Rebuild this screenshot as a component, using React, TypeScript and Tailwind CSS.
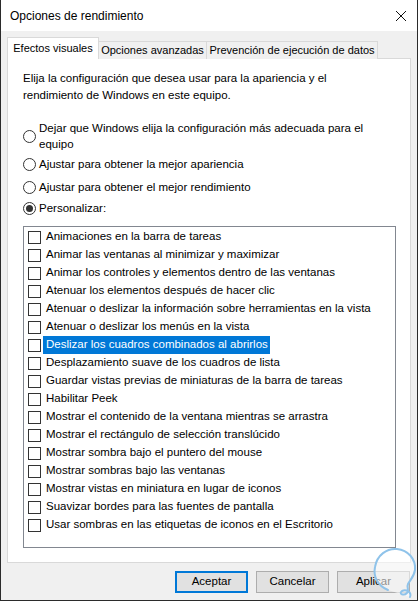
import React from "react";

const items = [
  "Animaciones en la barra de tareas",
  "Animar las ventanas al minimizar y maximizar",
  "Animar los controles y elementos dentro de las ventanas",
  "Atenuar los elementos después de hacer clic",
  "Atenuar o deslizar la información sobre herramientas en la vista",
  "Atenuar o deslizar los menús en la vista",
  "Deslizar los cuadros combinados al abrirlos",
  "Desplazamiento suave de los cuadros de lista",
  "Guardar vistas previas de miniaturas de la barra de tareas",
  "Habilitar Peek",
  "Mostrar el contenido de la ventana mientras se arrastra",
  "Mostrar el rectángulo de selección translúcido",
  "Mostrar sombra bajo el puntero del mouse",
  "Mostrar sombras bajo las ventanas",
  "Mostrar vistas en miniatura en lugar de iconos",
  "Suavizar bordes para las fuentes de pantalla",
  "Usar sombras en las etiquetas de iconos en el Escritorio",
];

function Radio({ checked }: { checked?: boolean }) {
  return (
    <span className="w-[13px] h-[13px] rounded-full border border-[#333] bg-white flex items-center justify-center shrink-0">
      {checked && <span className="w-[7px] h-[7px] rounded-full bg-[#333]" />}
    </span>
  );
}

function Button({ label, primary }: { label: string; primary?: boolean }) {
  return (
    <button
      className={
        "w-[73px] h-[22px] bg-[#e1e1e1] text-[11.5px] text-black " +
        (primary ? "border-2 border-[#0078d7]" : "border border-[#adadad]")
      }
    >
      {label}
    </button>
  );
}

export default function App() {
  return (
    <div
      className="w-[419px] h-[602px] bg-white relative"
      style={{ fontFamily: '"Liberation Sans", Arial, sans-serif' }}
    >
      <div className="w-[418px] h-[601px] border-l border-r border-b border-[#2b2b2b] flex flex-col">
        <div className="h-[31px] bg-white flex items-center justify-between pl-[9px] pr-[8px] shrink-0">
          <span className="text-[12px] text-black">Opciones de rendimiento</span>
          <svg width="12" height="12" viewBox="0 0 12 12" className="mr-[2px]">
            <path d="M1 1L11 11M11 1L1 11" stroke="#111" strokeWidth="1" />
          </svg>
        </div>

        <div className="flex-1 bg-[#f0f0f0] px-[6px] pt-[6px] flex flex-col">
          <div className="flex items-end h-[22px] text-[11px] text-black relative z-10 whitespace-nowrap">
            <div className="h-[22px] bg-white border border-b-0 border-[#d9d9d9] flex items-center justify-center w-[92px]">
              Efectos visuales
            </div>
            <div className="h-[18px] bg-[#f0f0f0] border border-l-0 border-b-0 border-[#d9d9d9] flex items-center justify-center w-[108px]">
              Opciones avanzadas
            </div>
            <div className="h-[18px] bg-[#f0f0f0] border border-l-0 border-b-0 border-[#d9d9d9] flex items-center justify-center w-[171px]">
              Prevención de ejecución de datos
            </div>
          </div>

          <div className="w-[404px] h-[505px] bg-white border border-[#d9d9d9] -mt-px pl-[15px] pt-[11px] text-[11.5px] text-black">
            <p className="leading-[17px] w-[330px]">
              Elija la configuración que desea usar para la apariencia y el rendimiento de Windows en este equipo.
            </p>

            <div className="mt-[16px] flex items-center gap-[3px]">
              <Radio />
              <p className="leading-[16px] w-[350px]">
                Dejar que Windows elija la configuración más adecuada para el equipo
              </p>
            </div>
            <div className="mt-[4px] flex items-center gap-[3px] h-[17px]">
              <Radio />
              <span>Ajustar para obtener la mejor apariencia</span>
            </div>
            <div className="mt-[6px] flex items-center gap-[3px] h-[17px]">
              <Radio />
              <span>Ajustar para obtener el mejor rendimiento</span>
            </div>
            <div className="mt-[4px] flex items-center gap-[3px] h-[17px]">
              <Radio checked />
              <span>Personalizar:</span>
            </div>

            <div className="mt-[9px] w-[373px] h-[322px] border border-[#828790] pt-[1px] pl-[4px]">
              {items.map((t, i) => {
                const sel = i === 6;
                return (
                  <div key={t} className="h-[18px] flex items-center">
                    <span className="w-[13px] h-[13px] border border-[#333] bg-white shrink-0" />
                    <span
                      className={
                        "ml-[2px] h-[18px] pl-[3px] pr-[2px] flex items-center whitespace-nowrap " +
                        (sel ? "bg-[#0078d7] text-white" : "")
                      }
                    >
                      {t}
                    </span>
                  </div>
                );
              })}
            </div>
          </div>

          <div className="flex justify-end gap-[8px] mt-[8px] pr-[1px]">
            <Button label="Aceptar" primary />
            <Button label="Cancelar" />
            <Button label="Aplicar" />
          </div>
        </div>
      </div>

      <svg
        className="absolute left-[372px] top-[546px]"
        width="46"
        height="54"
        viewBox="0 0 46 54"
      >
        <path
          d="M16 44 C6 40 1 31 3 21 C5 9 15 2 25 3 C36 4 44 13 43 24 C42 31 38 34 36 38 C34 42 38 44 35 47 C32 50 26 48 30 45 C34 43 40 46 38 51"
          fill="rgba(255,255,255,0.55)"
          stroke="#8fc3ea"
          strokeWidth="2"
          strokeLinecap="round"
        />
      </svg>
    </div>
  );
}
